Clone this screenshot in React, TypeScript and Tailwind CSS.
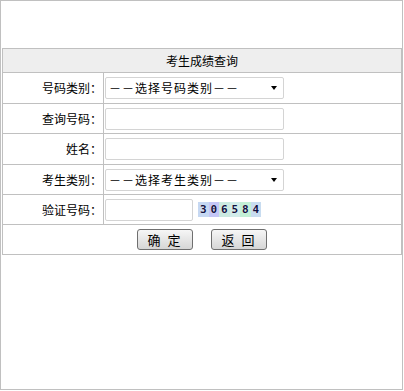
import React from "react";

const font = "font-['SimSun','Noto_Sans_CJK_SC',sans-serif]";

function Row({
  label,
  h,
  children,
}: {
  label: string;
  h: string;
  children: React.ReactNode;
}) {
  return (
    <div className={`flex border-t border-[#c0c0c0] ${h}`}>
      <div className="w-[100px] flex items-center justify-end pr-[1px] text-[12px] text-black">
        {label}
      </div>
      <div className="flex flex-1 items-center border-l border-[#c0c0c0] pl-[1px]">
        {children}
      </div>
    </div>
  );
}

function FakeSelect({ text }: { text: string }) {
  return (
    <div className="flex h-[22px] w-[179px] items-center justify-between rounded-[2px] border border-[#d4d4d4] bg-white pl-[3px] pr-[6px]">
      <span className="text-[12px] tracking-[1px] text-black">{text}</span>
      <span className="h-0 w-0 border-x-[3.5px] border-t-[4px] border-x-transparent border-t-black" />
    </div>
  );
}

function Captcha() {
  const digits = [
    { d: "3", bg: "bg-[#c6d8f2]" },
    { d: "0", bg: "bg-[#c4c6f6]" },
    { d: "6", bg: "bg-[#cbe9e0]" },
    { d: "5", bg: "bg-[#d2ecea]" },
    { d: "8", bg: "bg-[#c3f0d6]" },
    { d: "4", bg: "bg-[#c8dcf0]" },
  ];
  return (
    <div className="ml-[5px] flex h-[15px]">
      {digits.map((x, i) => (
        <span
          key={i}
          className={`${x.bg} flex w-[10.5px] items-center justify-center font-['DejaVu_Sans_Mono',monospace] text-[11px] font-bold leading-none text-[#101040] [text-shadow:0_0_1px_#fff]`}
        >
          {x.d}
        </span>
      ))}
    </div>
  );
}

export default function App() {
  return (
    <div
      className={`${font} h-[390px] w-[403px] border border-[#c0c0c0] bg-white pt-[47px]`}
    >
      <div className="ml-[1px] border-x border-b border-[#c0c0c0]">
        <div className="flex h-[24px] items-center justify-center border-t border-[#c0c0c0] bg-[#eeeeee] text-[12px] text-black">
          考生成绩查询
        </div>
        <Row label="号码类别：" h="h-[31px]">
          <FakeSelect text="－－选择号码类别－－" />
        </Row>
        <Row label="查询号码：" h="h-[30px]">
          <div className="h-[22px] w-[179px] rounded-[2px] border border-[#d4d4d4] bg-white" />
        </Row>
        <Row label="姓名：" h="h-[31px]">
          <div className="h-[22px] w-[179px] rounded-[2px] border border-[#d4d4d4] bg-white" />
        </Row>
        <Row label="考生类别：" h="h-[30px]">
          <FakeSelect text="－－选择考生类别－－" />
        </Row>
        <Row label="验证号码：" h="h-[30px]">
          <div className="h-[22px] w-[88px] rounded-[2px] border border-[#d4d4d4] bg-white" />
          <Captcha />
        </Row>
        <div className="flex h-[30px] items-center justify-center gap-[18px] border-t border-[#c0c0c0]">
          <button className="h-[21px] w-[56px] rounded-[3px] border border-[#6f6f6f] bg-gradient-to-b from-[#f6f6f6] to-[#d6d6d6] text-[13px] tracking-[2px] text-black">
            确&nbsp;定
          </button>
          <button className="h-[21px] w-[56px] rounded-[3px] border border-[#6f6f6f] bg-gradient-to-b from-[#f6f6f6] to-[#d6d6d6] text-[13px] tracking-[2px] text-black">
            返&nbsp;回
          </button>
        </div>
      </div>
    </div>
  );
}
